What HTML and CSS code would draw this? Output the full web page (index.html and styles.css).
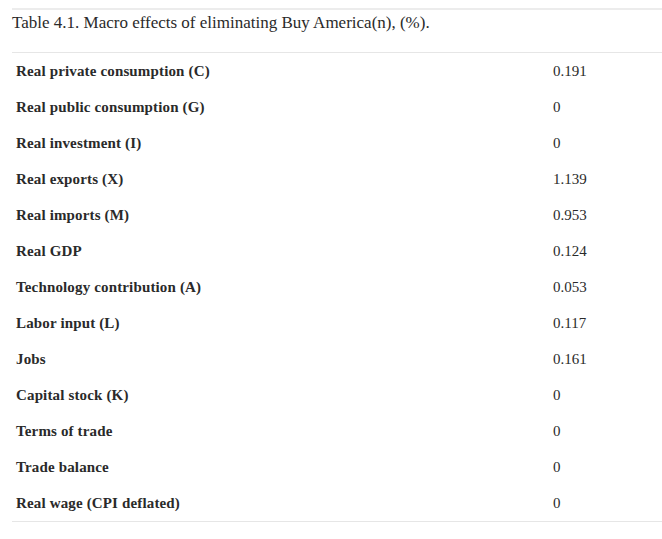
FILE: index.html
```html
<!DOCTYPE html>
<html>
<head>
<meta charset="utf-8">
<link rel="stylesheet" href="styles.css">
</head>
<body>
<div class="table-wrap">
  <div class="caption">Table 4.1. Macro effects of eliminating Buy America(n), (%).</div>
  <div class="rows">
    <div class="row"><span class="label">Real private consumption (C)</span><span class="value">0.191</span></div>
    <div class="row"><span class="label">Real public consumption (G)</span><span class="value">0</span></div>
    <div class="row"><span class="label">Real investment (I)</span><span class="value">0</span></div>
    <div class="row"><span class="label">Real exports (X)</span><span class="value">1.139</span></div>
    <div class="row"><span class="label">Real imports (M)</span><span class="value">0.953</span></div>
    <div class="row"><span class="label">Real GDP</span><span class="value">0.124</span></div>
    <div class="row"><span class="label">Technology contribution (A)</span><span class="value">0.053</span></div>
    <div class="row"><span class="label">Labor input (L)</span><span class="value">0.117</span></div>
    <div class="row"><span class="label">Jobs</span><span class="value">0.161</span></div>
    <div class="row"><span class="label">Capital stock (K)</span><span class="value">0</span></div>
    <div class="row"><span class="label">Terms of trade</span><span class="value">0</span></div>
    <div class="row"><span class="label">Trade balance</span><span class="value">0</span></div>
    <div class="row"><span class="label">Real wage (CPI deflated)</span><span class="value">0</span></div>
  </div>
</div>
</body>
</html>
```

FILE: styles.css
```css
html, body {
  margin: 0;
  padding: 0;
  background: #ffffff;
}
body {
  font-family: "Liberation Serif", "Times New Roman", serif;
  color: #2a2a2a;
}
.table-wrap {
  margin: 8px 0 0 12px;
  border-top: 2px solid #ececec;
}
.caption {
  font-size: 17px;
  line-height: 20px;
  padding: 3px 0 0 0;
  height: 39px;
  border-bottom: 1px solid #e6e6e6;
}
.rows {
  border-bottom: 1px solid #e6e6e6;
}
.row {
  display: grid;
  grid-template-columns: 541px 1fr;
  height: 36px;
  align-items: center;
  font-size: 15px;
}
.label {
  padding-left: 4px;
  font-weight: bold;
  letter-spacing: 0.15px;
}
.value {
  font-weight: normal;
}
```
